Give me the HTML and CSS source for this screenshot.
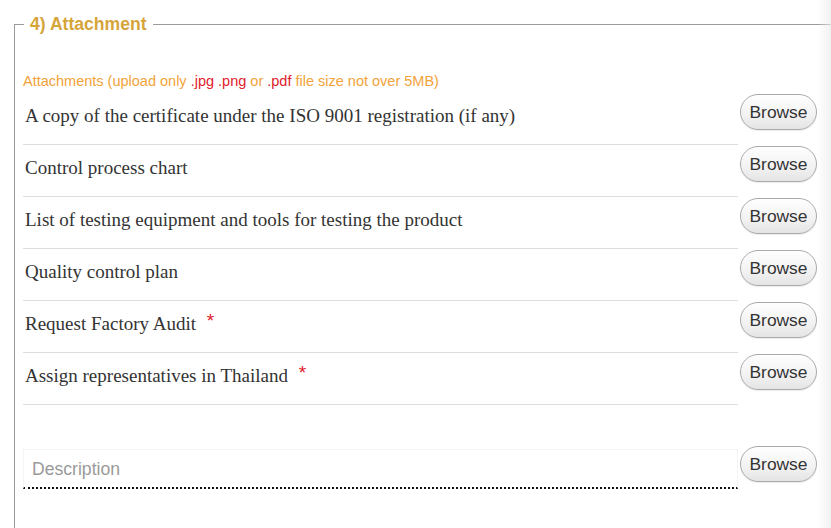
FILE: index.html
```html
<!DOCTYPE html>
<html>
<head>
<meta charset="utf-8">
<link rel="stylesheet" href="styles.css">
</head>
<body>
<div class="page">
  <fieldset class="section">
    <legend class="section-title">4) Attachment</legend>
    <p class="note">Attachments (upload only <span class="ext">.jpg .png</span> or <span class="ext">.pdf</span> file size not over 5MB)</p>
    <div class="rows">
      <div class="row">
        <div class="label">A copy of the certificate under the ISO 9001 registration (if any)</div>
        <button class="browse">Browse</button>
      </div>
      <div class="row">
        <div class="label">Control process chart</div>
        <button class="browse">Browse</button>
      </div>
      <div class="row">
        <div class="label">List of testing equipment and tools for testing the product</div>
        <button class="browse">Browse</button>
      </div>
      <div class="row">
        <div class="label">Quality control plan</div>
        <button class="browse">Browse</button>
      </div>
      <div class="row">
        <div class="label">Request Factory Audit <span class="req">*</span></div>
        <button class="browse">Browse</button>
      </div>
      <div class="row">
        <div class="label">Assign representatives in Thailand <span class="req">*</span></div>
        <button class="browse">Browse</button>
      </div>
    </div>
    <div class="desc-row">
      <input class="desc" type="text" placeholder="Description">
      <button class="browse">Browse</button>
    </div>
  </fieldset>
  <div class="edge-shade"></div>
</div>
</body>
</html>
```

FILE: styles.css
```css
html, body {
  margin: 0;
  padding: 0;
  background: #ffffff;
  overflow: hidden;
}
.page {
  position: relative;
  width: 831px;
  height: 528px;
  overflow: hidden;
}
.section {
  margin: 15px 0 0 14px;
  padding: 0 20px 60px 8px;
  width: 794px;
  border: 1px solid #9a9a9a;
  border-bottom: none;
  min-width: 0;
}
.section-title {
  margin-left: 1px;
  padding: 0 6px;
  font-family: "Liberation Sans", Arial, sans-serif;
  font-weight: bold;
  font-size: 17.6px;
  line-height: 18px;
  color: #d6a53a;
}
.note {
  margin: 40px 0 3px 0;
  font-family: "Liberation Sans", Arial, sans-serif;
  font-size: 14.5px;
  line-height: 17px;
  color: #f2a33a;
}
.ext {
  color: #e0202a;
}
.rows {
  display: flex;
  flex-direction: column;
}
.row {
  display: grid;
  grid-template-columns: 715px 77px;
  column-gap: 2px;
  align-items: start;
}
.label {
  box-sizing: border-box;
  height: 52px;
  border-bottom: 1px solid #dddddd;
  padding: 12px 0 0 2px;
  font-family: "Liberation Serif", "Times New Roman", serif;
  font-size: 19px;
  line-height: 22px;
  color: #333333;
}
.req {
  margin-left: 6px;
  font-family: "Liberation Sans", Arial, sans-serif;
  font-size: 19px;
  line-height: 0;
  color: #e0202a;
  vertical-align: 3px;
}
.browse {
  margin-top: 1px;
  width: 77px;
  height: 36px;
  padding: 0;
  border: 1px solid #aaaaaa;
  border-radius: 18px;
  background: linear-gradient(to bottom, #fefefe 0%, #f2f2f2 60%, #e4e4e4 100%);
  font-family: "Liberation Sans", Arial, sans-serif;
  font-size: 17.4px;
  color: #333333;
  box-shadow: 0 1px 1px rgba(0,0,0,0.08);
}
.desc-row {
  display: grid;
  grid-template-columns: 715px 77px;
  column-gap: 2px;
  align-items: start;
  margin-top: 44px;
}
.desc {
  box-sizing: border-box;
  width: 715px;
  height: 40px;
  margin: 0;
  padding: 1px 8px 0 8px;
  border: 1px solid #f4f4f4;
  border-bottom: 2px dotted #111111;
  font-family: "Liberation Sans", Arial, sans-serif;
  font-size: 17.6px;
  color: #333333;
  background: #ffffff;
  outline: none;
}
.desc::placeholder {
  color: #9a9a9a;
}
.desc-row .browse {
  margin-top: -3px;
}
.edge-shade {
  position: absolute;
  top: 0;
  right: 0;
  width: 14px;
  height: 100%;
  background: linear-gradient(to right, rgba(240,240,240,0) 0%, rgba(236,236,236,0.7) 100%);
  pointer-events: none;
}
```
